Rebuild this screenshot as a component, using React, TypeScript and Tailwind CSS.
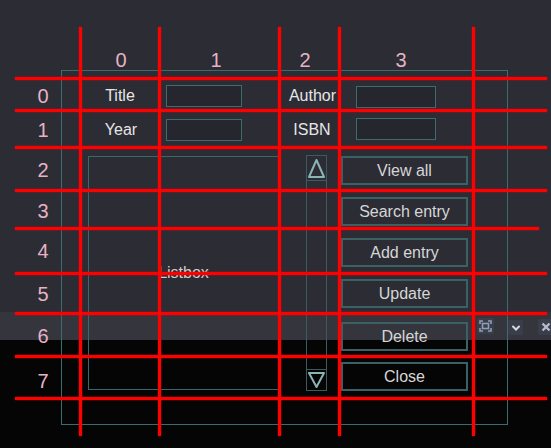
import type { ReactNode } from 'react';

// grid of the form: columns start at x=80, rows at y=78
const vLines = [80, 159, 279, 339, 473];
const hLines: [number, number][] = [
  [78, 532],
  [110, 532],
  [147, 532],
  [190, 532],
  [228, 524],
  [273, 532],
  [313, 532],
  [356, 532],
  [398, 532],
];

const colNums = [
  { n: '0', x: 121 },
  { n: '1', x: 216 },
  { n: '2', x: 305 },
  { n: '3', x: 401 },
];

const rowNums = [
  { n: '0', y: 96 },
  { n: '1', y: 130 },
  { n: '2', y: 170 },
  { n: '3', y: 211 },
  { n: '4', y: 251 },
  { n: '5', y: 294 },
  { n: '6', y: 336 },
  { n: '7', y: 381 },
];

function Label({ children, className = '' }: { children: ReactNode; className?: string }) {
  return (
    <div className={`flex h-[22px] items-center justify-center text-[16px] text-[#e6e6e6] ${className}`}>
      {children}
    </div>
  );
}

function Entry({ className = '' }: { className?: string }) {
  return <div className={`h-[22px] border border-[#3f6a6e] bg-black/10 ${className}`} />;
}

function Btn({ children, className = '' }: { children: ReactNode; className?: string }) {
  return (
    <div
      className={`ml-[1px] flex h-[29px] w-[127px] items-center justify-center border-2 border-[#3b6165] text-[16px] text-[#d6d6d6] ${className}`}
    >
      {children}
    </div>
  );
}

export default function App() {
  return (
    <div className="relative h-[448px] w-[551px] overflow-hidden bg-[linear-gradient(to_bottom,#2b2c34_0px,#2b2c34_312px,#34353d_312px,#34353d_340px,#050506_340px)] font-['Liberation_Sans',Arial,sans-serif]">
      {/* Form frame */}
      <div className="pl-[61px] pt-[70px]">
        <div className="h-[355px] w-[447px] border border-[#3a6c70] pl-[18px] pt-[7px]">
          <div className="grid grid-cols-[80px_120px_60px_133px] grid-rows-[32px_37px_43px_39px_44px_40px_43px_42px]">
            <div className="col-start-1 row-start-1">
              <Label className="mt-[7px]">Title</Label>
            </div>
            <div className="col-start-1 row-start-2">
              <Label className="mt-[9px] pl-[2px]">Year</Label>
            </div>
            <div className="col-start-2 row-start-1">
              <Entry className="ml-[6px] mt-[7px] w-[76px]" />
            </div>
            <div className="col-start-2 row-start-2">
              <Entry className="ml-[6px] mt-[9px] w-[76px]" />
            </div>
            <div className="col-start-3 row-start-1">
              <Label className="mt-[7px] pl-[5px]">Author</Label>
            </div>
            <div className="col-start-3 row-start-2">
              <Label className="mt-[9px] pl-[4px]">ISBN</Label>
            </div>
            <div className="col-start-4 row-start-1">
              <Entry className="ml-[16px] mt-[8px] w-[80px]" />
            </div>
            <div className="col-start-4 row-start-2">
              <Entry className="ml-[16px] mt-[8px] w-[80px]" />
            </div>

            {/* Listbox */}
            <div className="col-span-2 col-start-1 row-span-6 row-start-3">
              <div className="ml-[8px] mt-[9px] flex h-[234px] w-[191px] items-center justify-center border border-[#3b666a] text-[16px] text-[#cfcfcf]">
                Listbox
              </div>
            </div>

            {/* Scrollbar */}
            <div className="col-start-3 row-span-6 row-start-3">
              <div className="ml-[26px] mt-[8px] flex h-[236px] w-[21px] flex-col justify-between border border-[#3a5b5f]">
                <div className="border-b border-[#3a5b5f]">
                  <svg width="19" height="24" viewBox="0 0 19 24">
                    <polygon points="9.5,4 2,21 17,21" fill="none" stroke="#8cb4b6" strokeWidth="2" strokeLinejoin="round" />
                  </svg>
                </div>
                <div className="border-t border-[#3a5b5f]">
                  <svg width="19" height="20" viewBox="0 0 19 20">
                    <polygon points="2,3 17,3 9.5,17" fill="none" stroke="#8cb4b6" strokeWidth="2" strokeLinejoin="round" />
                  </svg>
                </div>
              </div>
            </div>

            {/* Buttons */}
            <div className="col-start-4 row-start-3">
              <Btn className="mt-[9px]">View all</Btn>
            </div>
            <div className="col-start-4 row-start-4">
              <Btn className="mt-[7px]">Search entry</Btn>
            </div>
            <div className="col-start-4 row-start-5">
              <Btn className="mt-[9px]">Add entry</Btn>
            </div>
            <div className="col-start-4 row-start-6">
              <Btn className="mt-[6px]">Update</Btn>
            </div>
            <div className="col-start-4 row-start-7">
              <Btn className="mt-[9px]">Delete</Btn>
            </div>
            <div className="col-start-4 row-start-8">
              <Btn className="mt-[6px]">Close</Btn>
            </div>
          </div>
        </div>
      </div>

      {/* Window controls */}
      <div className="absolute left-[477px] top-[318px] flex h-[16px] w-[17px] items-center justify-center rounded-[2px] bg-[#3a3d4a]">
        <svg width="13" height="12" viewBox="0 0 13 12" fill="none" stroke="#8f9fb4" strokeWidth="1.6">
          <path d="M1 4V1h3M9 1h3v3M12 8v3H9M4 11H1V8" />
          <rect x="3.5" y="3.5" width="6" height="5" />
        </svg>
      </div>
      <div className="absolute left-[508px] top-[320px] flex h-[15px] w-[15px] items-center justify-center rounded-[2px] bg-[#3a3d4a]">
        <svg width="10" height="8" viewBox="0 0 10 8" fill="none" stroke="#d4d8e0" strokeWidth="2" strokeLinecap="round">
          <path d="M2 2.5l3 3 3-3" />
        </svg>
      </div>
      <div className="absolute left-[538px] top-[319px] flex h-[16px] w-[16px] items-center justify-center rounded-[2px] bg-[#3a3d4a]">
        <svg width="10" height="10" viewBox="0 0 10 10" fill="none" stroke="#b4bccb" strokeWidth="2.4">
          <path d="M1.5 1.5l7 7M8.5 1.5l-7 7" />
        </svg>
      </div>

      {/* Grid annotation overlay */}
      {colNums.map((c) => (
        <span
          key={`c${c.n}`}
          className="absolute top-[50px] w-[20px] text-center text-[20px] leading-[20px] text-[#e6b3c6]"
          style={{ left: c.x - 10 }}
        >
          {c.n}
        </span>
      ))}
      {rowNums.map((r) => (
        <span
          key={`r${r.n}`}
          className="absolute left-[33px] w-[20px] text-center text-[20px] leading-[20px] text-[#e6b3c6]"
          style={{ top: r.y - 10 }}
        >
          {r.n}
        </span>
      ))}
      {vLines.map((x) => (
        <div
          key={`v${x}`}
          className="absolute top-[27px] h-[409px] w-[3px] bg-[#ff0000] shadow-[0_0_2px_rgba(255,0,0,0.7)]"
          style={{ left: x - 1.5 }}
        />
      ))}
      {hLines.map(([y, w]) => (
        <div
          key={`h${y}`}
          className="absolute left-[15px] h-[3px] bg-[#ff0000] shadow-[0_0_2px_rgba(255,0,0,0.7)]"
          style={{ top: y - 1.5, width: w }}
        />
      ))}
    </div>
  );
}
